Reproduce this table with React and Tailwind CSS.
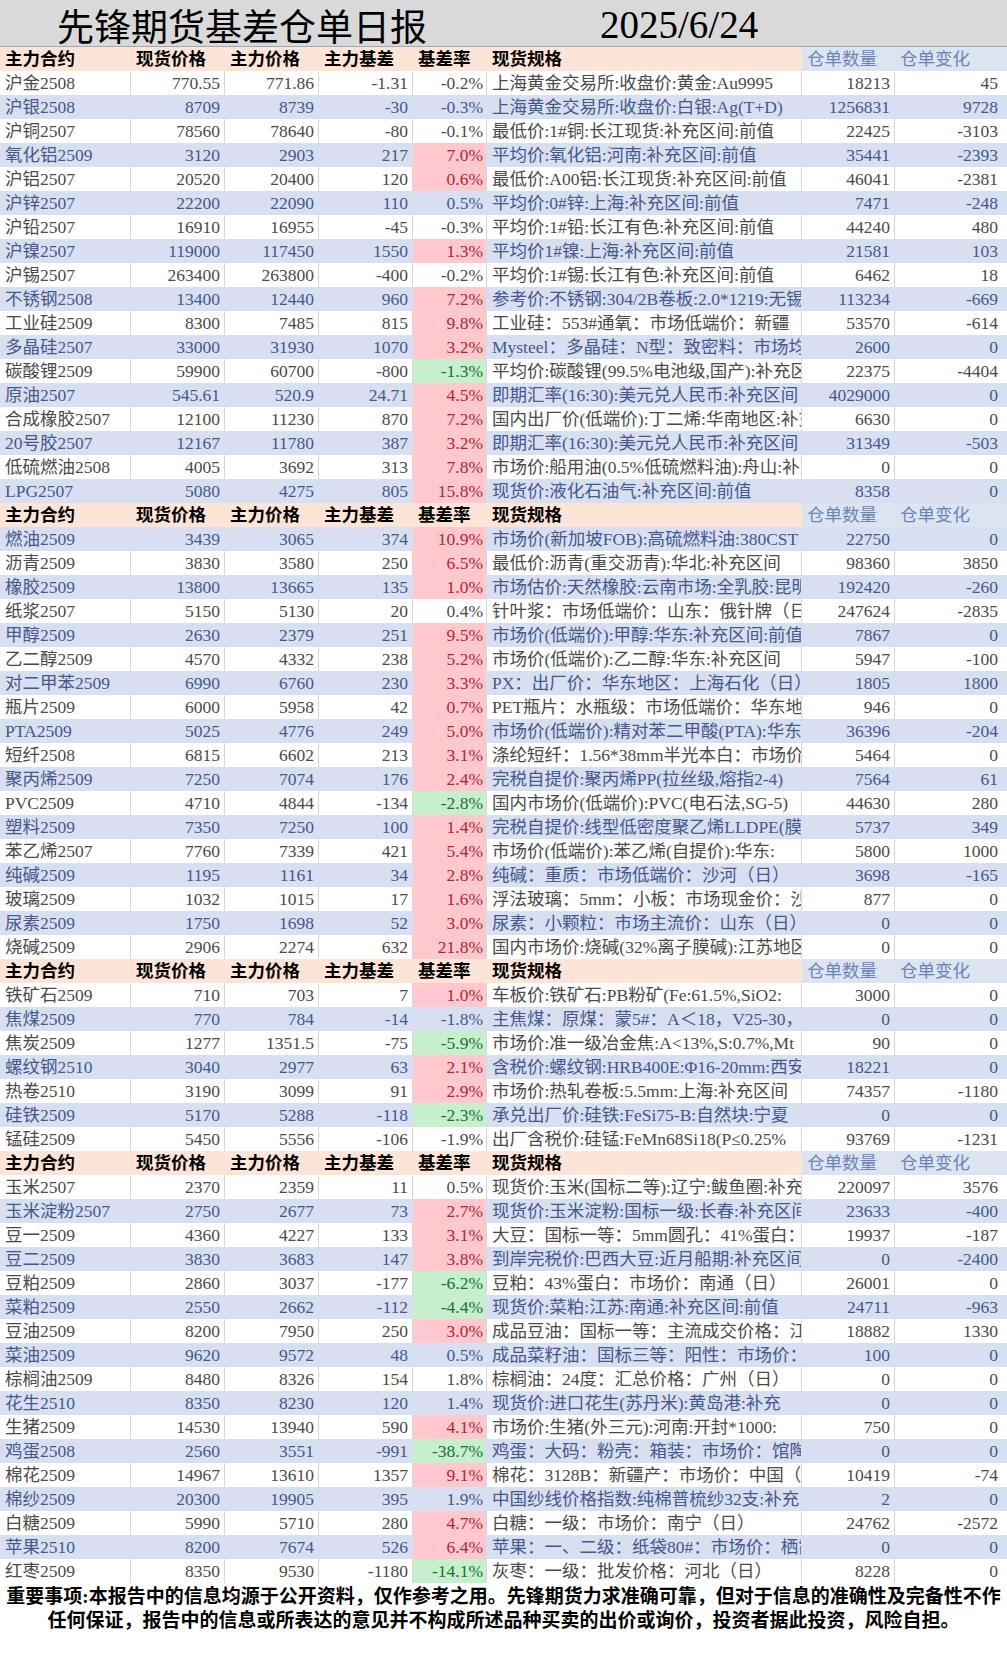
import React from "react";

const sections = [
  {
    startBlue: false,
    rows: [
      ["沪金2508", "770.55", "771.86", "-1.31", "-0.2%", "", "上海黄金交易所:收盘价:黄金:Au9995", "18213", "45"],
      ["沪银2508", "8709", "8739", "-30", "-0.3%", "", "上海黄金交易所:收盘价:白银:Ag(T+D)", "1256831", "9728"],
      ["沪铜2507", "78560", "78640", "-80", "-0.1%", "", "最低价:1#铜:长江现货:补充区间:前值", "22425", "-3103"],
      ["氧化铝2509", "3120", "2903", "217", "7.0%", "r", "平均价:氧化铝:河南:补充区间:前值", "35441", "-2393"],
      ["沪铝2507", "20520", "20400", "120", "0.6%", "r", "最低价:A00铝:长江现货:补充区间:前值", "46041", "-2381"],
      ["沪锌2507", "22200", "22090", "110", "0.5%", "", "平均价:0#锌:上海:补充区间:前值", "7471", "-248"],
      ["沪铅2507", "16910", "16955", "-45", "-0.3%", "", "平均价:1#铅:长江有色:补充区间:前值", "44240", "480"],
      ["沪镍2507", "119000", "117450", "1550", "1.3%", "r", "平均价1#镍:上海:补充区间:前值", "21581", "103"],
      ["沪锡2507", "263400", "263800", "-400", "-0.2%", "", "平均价:1#锡:长江有色:补充区间:前值", "6462", "18"],
      ["不锈钢2508", "13400", "12440", "960", "7.2%", "r", "参考价:不锈钢:304/2B卷板:2.0*1219:无锡", "113234", "-669"],
      ["工业硅2509", "8300", "7485", "815", "9.8%", "r", "工业硅：553#通氧：市场低端价：新疆（日）", "53570", "-614"],
      ["多晶硅2507", "33000", "31930", "1070", "3.2%", "r", "Mysteel：多晶硅：N型：致密料：市场均价", "2600", "0"],
      ["碳酸锂2509", "59900", "60700", "-800", "-1.3%", "g", "平均价:碳酸锂(99.5%电池级,国产):补充区间", "22375", "-4404"],
      ["原油2507", "545.61", "520.9", "24.71", "4.5%", "r", "即期汇率(16:30):美元兑人民币:补充区间", "4029000", "0"],
      ["合成橡胶2507", "12100", "11230", "870", "7.2%", "r", "国内出厂价(低端价):丁二烯:华南地区:补充", "6630", "0"],
      ["20号胶2507", "12167", "11780", "387", "3.2%", "r", "即期汇率(16:30):美元兑人民币:补充区间", "31349", "-503"],
      ["低硫燃油2508", "4005", "3692", "313", "7.8%", "r", "市场价:船用油(0.5%低硫燃料油):舟山:补充", "0", "0"],
      ["LPG2507", "5080", "4275", "805", "15.8%", "r", "现货价:液化石油气:补充区间:前值", "8358", "0"],
    ],
  },
  {
    startBlue: true,
    rows: [
      ["燃油2509", "3439", "3065", "374", "10.9%", "r", "市场价(新加坡FOB):高硫燃料油:380CST", "22750", "0"],
      ["沥青2509", "3830", "3580", "250", "6.5%", "r", "最低价:沥青(重交沥青):华北:补充区间", "98360", "3850"],
      ["橡胶2509", "13800", "13665", "135", "1.0%", "r", "市场估价:天然橡胶:云南市场:全乳胶:昆明", "192420", "-260"],
      ["纸浆2507", "5150", "5130", "20", "0.4%", "", "针叶浆：市场低端价：山东：俄针牌（日）", "247624", "-2835"],
      ["甲醇2509", "2630", "2379", "251", "9.5%", "r", "市场价(低端价):甲醇:华东:补充区间:前值", "7867", "0"],
      ["乙二醇2509", "4570", "4332", "238", "5.2%", "r", "市场价(低端价):乙二醇:华东:补充区间", "5947", "-100"],
      ["对二甲苯2509", "6990", "6760", "230", "3.3%", "r", "PX：出厂价：华东地区：上海石化（日）", "1805", "1800"],
      ["瓶片2509", "6000", "5958", "42", "0.7%", "r", "PET瓶片：水瓶级：市场低端价：华东地区", "946", "0"],
      ["PTA2509", "5025", "4776", "249", "5.0%", "r", "市场价(低端价):精对苯二甲酸(PTA):华东", "36396", "-204"],
      ["短纤2508", "6815", "6602", "213", "3.1%", "r", "涤纶短纤：1.56*38mm半光本白：市场价", "5464", "0"],
      ["聚丙烯2509", "7250", "7074", "176", "2.4%", "r", "完税自提价:聚丙烯PP(拉丝级,熔指2-4)", "7564", "61"],
      ["PVC2509", "4710", "4844", "-134", "-2.8%", "g", "国内市场价(低端价):PVC(电石法,SG-5)", "44630", "280"],
      ["塑料2509", "7350", "7250", "100", "1.4%", "r", "完税自提价:线型低密度聚乙烯LLDPE(膜", "5737", "349"],
      ["苯乙烯2507", "7760", "7339", "421", "5.4%", "r", "市场价(低端价):苯乙烯(自提价):华东:", "5800", "1000"],
      ["纯碱2509", "1195", "1161", "34", "2.8%", "r", "纯碱：重质：市场低端价：沙河（日）", "3698", "-165"],
      ["玻璃2509", "1032", "1015", "17", "1.6%", "r", "浮法玻璃：5mm：小板：市场现金价：沙河", "877", "0"],
      ["尿素2509", "1750", "1698", "52", "3.0%", "r", "尿素：小颗粒：市场主流价：山东（日）", "0", "0"],
      ["烧碱2509", "2906", "2274", "632", "21.8%", "r", "国内市场价:烧碱(32%离子膜碱):江苏地区", "0", "0"],
    ],
  },
  {
    startBlue: false,
    rows: [
      ["铁矿石2509", "710", "703", "7", "1.0%", "r", "车板价:铁矿石:PB粉矿(Fe:61.5%,SiO2:", "3000", "0"],
      ["焦煤2509", "770", "784", "-14", "-1.8%", "", "主焦煤：原煤：蒙5#：A＜18，V25-30，", "0", "0"],
      ["焦炭2509", "1277", "1351.5", "-75", "-5.9%", "g", "市场价:准一级冶金焦:A<13%,S:0.7%,Mt", "90", "0"],
      ["螺纹钢2510", "3040", "2977", "63", "2.1%", "r", "含税价:螺纹钢:HRB400E:Φ16-20mm:西安", "18221", "0"],
      ["热卷2510", "3190", "3099", "91", "2.9%", "r", "市场价:热轧卷板:5.5mm:上海:补充区间", "74357", "-1180"],
      ["硅铁2509", "5170", "5288", "-118", "-2.3%", "g", "承兑出厂价:硅铁:FeSi75-B:自然块:宁夏", "0", "0"],
      ["锰硅2509", "5450", "5556", "-106", "-1.9%", "", "出厂含税价:硅锰:FeMn68Si18(P≤0.25%", "93769", "-1231"],
    ],
  },
  {
    startBlue: false,
    rows: [
      ["玉米2507", "2370", "2359", "11", "0.5%", "", "现货价:玉米(国标二等):辽宁:鲅鱼圈:补充", "220097", "3576"],
      ["玉米淀粉2507", "2750", "2677", "73", "2.7%", "r", "现货价:玉米淀粉:国标一级:长春:补充区间", "23633", "-400"],
      ["豆一2509", "4360", "4227", "133", "3.1%", "r", "大豆：国标一等：5mm圆孔：41%蛋白：含", "19937", "-187"],
      ["豆二2509", "3830", "3683", "147", "3.8%", "r", "到岸完税价:巴西大豆:近月船期:补充区间", "0", "-2400"],
      ["豆粕2509", "2860", "3037", "-177", "-6.2%", "g", "豆粕：43%蛋白：市场价：南通（日）", "26001", "0"],
      ["菜粕2509", "2550", "2662", "-112", "-4.4%", "g", "现货价:菜粕:江苏:南通:补充区间:前值", "24711", "-963"],
      ["豆油2509", "8200", "7950", "250", "3.0%", "r", "成品豆油：国标一等：主流成交价格：江苏", "18882", "1330"],
      ["菜油2509", "9620", "9572", "48", "0.5%", "", "成品菜籽油：国标三等：阳性：市场价：", "100", "0"],
      ["棕榈油2509", "8480", "8326", "154", "1.8%", "", "棕榈油：24度：汇总价格：广州（日）", "0", "0"],
      ["花生2510", "8350", "8230", "120", "1.4%", "", "现货价:进口花生(苏丹米):黄岛港:补充", "0", "0"],
      ["生猪2509", "14530", "13940", "590", "4.1%", "r", "市场价:生猪(外三元):河南:开封*1000:", "750", "0"],
      ["鸡蛋2508", "2560", "3551", "-991", "-38.7%", "g", "鸡蛋：大码：粉壳：箱装：市场价：馆陶", "0", "0"],
      ["棉花2509", "14967", "13610", "1357", "9.1%", "r", "棉花：3128B：新疆产：市场价：中国（", "10419", "-74"],
      ["棉纱2509", "20300", "19905", "395", "1.9%", "", "中国纱线价格指数:纯棉普梳纱32支:补充", "2", "0"],
      ["白糖2509", "5990", "5710", "280", "4.7%", "r", "白糖：一级：市场价：南宁（日）", "24762", "-2572"],
      ["苹果2510", "8200", "7674", "526", "6.4%", "r", "苹果：一、二级：纸袋80#：市场价：栖霞", "0", "0"],
      ["红枣2509", "8350", "9530", "-1180", "-14.1%", "g", "灰枣：一级：批发价格：河北（日）", "8228", "0"],
    ],
  },
];

const grid = "grid grid-cols-[131px_94px_94px_94px_74px_315px_93px_112px] h-[24px] leading-[24px]";

const HeaderRow = () => (
  <div className={grid}>
    {["主力合约", "现货价格", "主力价格", "主力基差", "基差率", "现货规格"].map((t) => (
      <div key={t} className="bg-[#fce4d6] pl-[5px] font-bold text-black whitespace-nowrap">
        {t}
      </div>
    ))}
    <div className="bg-[#dce4f2] pl-[5px] text-[#6a84b8] whitespace-nowrap">仓单数量</div>
    <div className="bg-[#dce4f2] pl-[5px] text-[#6a84b8] whitespace-nowrap">仓单变化</div>
  </div>
);

const DataRow = ({ r, blue }) => {
  const [name, spot, fut, basis, rate, flag, spec, qty, chg] = r;
  const row = blue ? "bg-[#d7dff0] text-[#44598c]" : "bg-white text-[#4a4a4a]";
  const cell = blue ? "border-r border-[#d7dff0]" : "border-r border-[#d6d6d6]";
  const rateCls =
    flag === "r"
      ? "bg-[#ffc7ce] text-[#b3262f]"
      : flag === "g"
      ? "bg-[#c6efce] text-[#22702f]"
      : "";

  return (
    <div className={`${grid} ${row}`}>
      <div className={`${cell} pl-[5px] whitespace-nowrap overflow-hidden`}>{name}</div>
      <div className={`${cell} pr-[4px] text-right`}>{spot}</div>
      <div className={`${cell} pr-[4px] text-right`}>{fut}</div>
      <div className={`${cell} pr-[4px] text-right`}>{basis}</div>
      <div className={`${cell} pr-[3px] text-right ${rateCls}`}>{rate}</div>
      <div className={`${cell} pl-[5px] whitespace-nowrap overflow-hidden`}>{spec}</div>
      <div className={`${cell} pr-[4px] text-right`}>{qty}</div>
      <div className="pr-[9px] text-right">{chg}</div>
    </div>
  );
};

export default function App() {
  return (
    <div
      className="w-[1007px] h-[1680px] bg-white text-[17.5px] overflow-hidden"
      style={{ fontFamily: '"Liberation Serif", "Noto Sans CJK SC", serif' }}
    >
      {/* Title band */}
      <div className="h-[47px] bg-[#d9d9d9] border-b border-[#9ea7b6] flex items-center pt-[3px]">
        <div
          className="w-[600px] pl-[57px] text-[37px] leading-[40px] text-black"
          style={{ fontFamily: '"Noto Sans CJK SC", sans-serif' }}
        >
          先锋期货基差仓单日报
        </div>
        <div className="text-[39px] leading-[40px] text-black">2025/6/24</div>
      </div>

      {sections.map((s, si) => (
        <div key={si}>
          <HeaderRow />
          {s.rows.map((r, i) => (
            <DataRow key={r[0]} r={r} blue={s.startBlue ? i % 2 === 0 : i % 2 === 1} />
          ))}
        </div>
      ))}

      {/* Disclaimer */}
      <div
        className="pt-[2px] text-center font-bold text-black text-[19px] leading-[24px] whitespace-nowrap"
        style={{ fontFamily: '"Liberation Serif", "Noto Sans CJK SC", serif' }}
      >
        <div>重要事项:本报告中的信息均源于公开资料，仅作参考之用。先锋期货力求准确可靠，但对于信息的准确性及完备性不作</div>
        <div>任何保证，报告中的信息或所表达的意见并不构成所述品种买卖的出价或询价，投资者据此投资，风险自担。</div>
      </div>
    </div>
  );
}
